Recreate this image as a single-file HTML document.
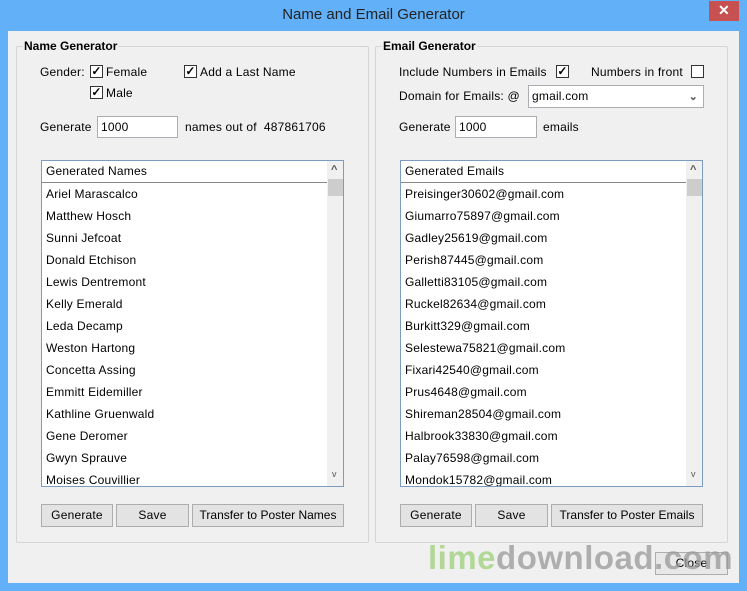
<!DOCTYPE html>
<html><head><meta charset="utf-8"><style>
*{box-sizing:border-box;margin:0;padding:0}
body{width:747px;height:591px;overflow:hidden;background:#62b1f8;font-family:"Liberation Sans",sans-serif;font-size:12px;letter-spacing:0.2px;color:#000;position:relative}
.a{position:absolute;white-space:nowrap}
.title{left:0;top:6px;width:747px;text-align:center;font-size:15px;color:#222;letter-spacing:0}
.x{left:709px;top:1px;width:30px;height:20px;background:#c75050;color:#fff;text-align:center;font-size:14px;line-height:19px;font-weight:bold}
.content{left:8px;top:31px;width:731px;height:552px;background:#f0f0f0}
.grp{border:1px solid #d5d5d5;border-radius:2px}
.gt{font-weight:bold;background:#f0f0f0;padding:0 1px;letter-spacing:0}
.cb{width:13px;height:13px;border:1px solid #333;background:#fff;font-size:12px;line-height:11px;text-align:center;font-weight:bold}
.tf{background:#fff;border:1px solid #abadb3;padding-left:3px;line-height:20px}
.list{background:#fff;border:1px solid #7a9cc0}
.hdr{left:0;top:0;height:22px;border-right:1px solid #888;border-bottom:1px solid #888;padding-left:4px;line-height:20px;background:#fff}
.row{left:4px;height:22px;line-height:22px}
.sb{background:#f0f0f0;width:17px}
.btn{background:#e3e3e3;border:1px solid #adadad;text-align:center;line-height:21px;height:23px}
</style></head><body>
<div class="a title">Name and Email Generator</div>
<div class="a x">✕</div>
<div class="a content"></div>

<div class="a grp" style="left:16px;top:46px;width:353px;height:497px"></div>
<div class="a gt" style="left:23px;top:39px">Name Generator</div>
<div class="a grp" style="left:375px;top:46px;width:353px;height:497px"></div>
<div class="a gt" style="left:382px;top:39px">Email Generator</div>

<div class="a" style="left:40px;top:65px">Gender:</div>
<div class="a cb" style="left:90px;top:65px">✓</div><div class="a" style="left:106px;top:65px">Female</div>
<div class="a cb" style="left:184px;top:65px">✓</div><div class="a" style="left:200px;top:65px">Add a Last Name</div>
<div class="a cb" style="left:90px;top:86px">✓</div><div class="a" style="left:106px;top:86px">Male</div>
<div class="a" style="left:40px;top:120px">Generate</div>
<div class="a tf" style="left:97px;top:116px;width:81px;height:22px">1000</div>
<div class="a" style="left:185px;top:120px">names out of &nbsp;487861706</div>

<div class="a" style="left:399px;top:65px">Include Numbers in Emails</div>
<div class="a cb" style="left:556px;top:65px">✓</div>
<div class="a" style="left:591px;top:65px">Numbers in front</div>
<div class="a cb" style="left:691px;top:65px"></div>
<div class="a" style="left:399px;top:89px">Domain for Emails: @</div>
<div class="a tf" style="left:528px;top:85px;width:176px;height:23px">gmail.com<span style="position:absolute;right:5px;top:1px;color:#555;font-size:11px;font-weight:bold">&#8964;</span></div>
<div class="a" style="left:399px;top:120px">Generate</div>
<div class="a tf" style="left:455px;top:116px;width:82px;height:22px">1000</div>
<div class="a" style="left:543px;top:120px">emails</div>

<div class="a list" style="left:41px;top:160px;width:303px;height:327px;overflow:hidden">
<div class="a hdr" style="width:286px">Generated Names</div>
<div class="a sb" style="left:285px;top:0;height:325px"><div class="a" style="left:4px;top:3px;font-size:11px;font-weight:bold;color:#555">^</div><div class="a" style="left:1px;top:18px;width:15px;height:17px;background:#cdcdcd"></div><div class="a" style="left:5px;top:308px;font-size:9px;color:#555">v</div></div>
<div class="a row" style="top:22px">Ariel Marascalco</div>
<div class="a row" style="top:44px">Matthew Hosch</div>
<div class="a row" style="top:66px">Sunni Jefcoat</div>
<div class="a row" style="top:88px">Donald Etchison</div>
<div class="a row" style="top:110px">Lewis Dentremont</div>
<div class="a row" style="top:132px">Kelly Emerald</div>
<div class="a row" style="top:154px">Leda Decamp</div>
<div class="a row" style="top:176px">Weston Hartong</div>
<div class="a row" style="top:198px">Concetta Assing</div>
<div class="a row" style="top:220px">Emmitt Eidemiller</div>
<div class="a row" style="top:242px">Kathline Gruenwald</div>
<div class="a row" style="top:264px">Gene Deromer</div>
<div class="a row" style="top:286px">Gwyn Sprauve</div>
<div class="a row" style="top:308px">Moises Couvillier</div>
</div>

<div class="a list" style="left:400px;top:160px;width:303px;height:327px;overflow:hidden">
<div class="a hdr" style="width:286px">Generated Emails</div>
<div class="a sb" style="left:285px;top:0;height:325px"><div class="a" style="left:4px;top:3px;font-size:11px;font-weight:bold;color:#555">^</div><div class="a" style="left:1px;top:18px;width:15px;height:17px;background:#cdcdcd"></div><div class="a" style="left:5px;top:308px;font-size:9px;color:#555">v</div></div>
<div class="a row" style="top:22px">Preisinger30602@gmail.com</div>
<div class="a row" style="top:44px">Giumarro75897@gmail.com</div>
<div class="a row" style="top:66px">Gadley25619@gmail.com</div>
<div class="a row" style="top:88px">Perish87445@gmail.com</div>
<div class="a row" style="top:110px">Galletti83105@gmail.com</div>
<div class="a row" style="top:132px">Ruckel82634@gmail.com</div>
<div class="a row" style="top:154px">Burkitt329@gmail.com</div>
<div class="a row" style="top:176px">Selestewa75821@gmail.com</div>
<div class="a row" style="top:198px">Fixari42540@gmail.com</div>
<div class="a row" style="top:220px">Prus4648@gmail.com</div>
<div class="a row" style="top:242px">Shireman28504@gmail.com</div>
<div class="a row" style="top:264px">Halbrook33830@gmail.com</div>
<div class="a row" style="top:286px">Palay76598@gmail.com</div>
<div class="a row" style="top:308px">Mondok15782@gmail.com</div>
</div>

<div class="a btn" style="left:41px;top:504px;width:72px">Generate</div>
<div class="a btn" style="left:116px;top:504px;width:73px">Save</div>
<div class="a btn" style="left:192px;top:504px;width:152px;letter-spacing:0">Transfer to Poster Names</div>
<div class="a btn" style="left:400px;top:504px;width:72px">Generate</div>
<div class="a btn" style="left:475px;top:504px;width:73px">Save</div>
<div class="a btn" style="left:551px;top:504px;width:152px;letter-spacing:0">Transfer to Poster Emails</div>
<div class="a btn" style="left:655px;top:552px;width:73px;background:#e8e8e8">Close</div>
<div class="a" style="left:428px;top:539px;font-size:33px;font-weight:bold;letter-spacing:0.5px;opacity:.75"><span style="color:#9ed07a">lime</span><span style="color:#999">download.com</span></div>
</body></html>
